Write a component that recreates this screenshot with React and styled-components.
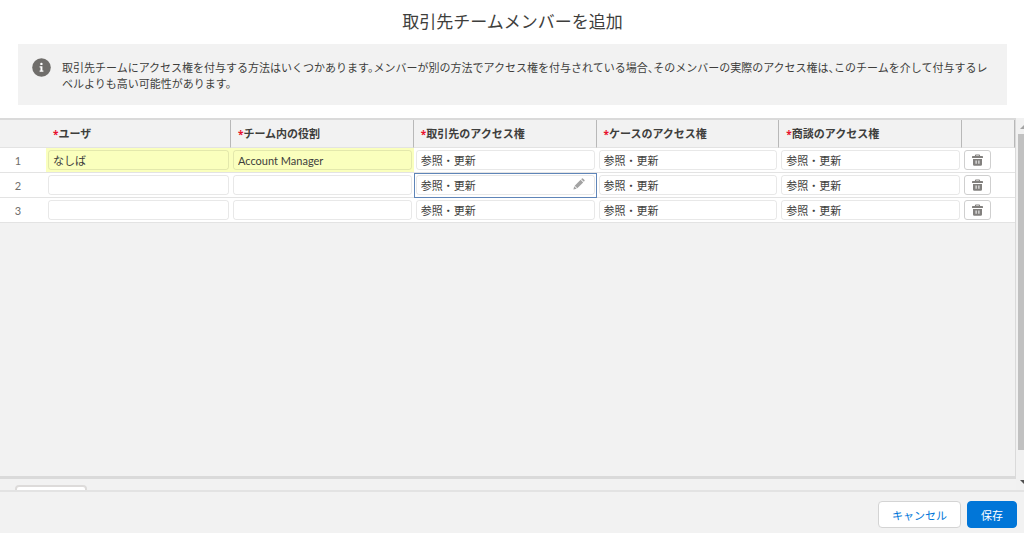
import React from 'react';
import styled, { createGlobalStyle } from 'styled-components';

const COLORS = {
	text: '#3e3e3c',
	muted: '#706e6b',
	icon: '#82807e',
	grey: '#f2f2f2',
	line: '#dadada',
	headLine: '#b8b8b8',
	rowLine: '#e3e3e3',
	edited: '#faffbd',
	active: '#5f85b8',
	blue: '#0176d8',
	red: '#e8112d'
};

const columns = [
	{ key: 'user', label: 'ユーザ', width: '185px' },
	{ key: 'role', label: 'チーム内の役割' },
	{ key: 'account', label: '取引先のアクセス権' },
	{ key: 'cases', label: 'ケースのアクセス権' },
	{ key: 'deal', label: '商談のアクセス権' }
];

const access = {
	account: '参照・更新',
	cases: '参照・更新',
	deal: '参照・更新'
};

const members = [
	{
		id: 1,
		user: 'なしば',
		role: 'Account Manager',
		...access,
		edited: ['user', 'role']
	},
	{ id: 2, user: '', role: '', ...access, edited: [], active: 'account' },
	{ id: 3, user: '', role: '', ...access, edited: [] }
];

function InfoIcon() {
	return (
		<svg width="19" height="19" viewBox="0 0 19 19" aria-hidden="true">
			<circle cx="9.5" cy="9.5" r="9.3" fill={COLORS.muted} />
			<circle cx="9.4" cy="5.9" r="1.2" fill="#fff" />
			<path d="M7.6 8.2h2.8v4.2h1v1.3H7.6v-1.3h.9V9.5h-.9z" fill="#fff" />
		</svg>
	);
}

function TrashIcon() {
	return (
		<svg width="11" height="12" viewBox="0 0 11 12" aria-hidden="true">
			<path
				d="M3.5 2.5V1.5q0-.5.5-.5h3q.5 0 .5.5v1"
				fill="none"
				stroke={COLORS.icon}
				strokeWidth="1.2"
			/>
			<rect x="0" y="2" width="11" height="2" rx=".6" fill={COLORS.icon} />
			<path
				fillRule="evenodd"
				fill={COLORS.icon}
				d="M1 5h9v5.500q0 1.300-1.300 1.300H2.300Q1 11.800 1 10.500zM3.600 6.500v3.300h1V6.500zM6.400 6.500v3.300h1V6.500z"
			/>
		</svg>
	);
}

function PencilIcon() {
	return (
		<svg width="12" height="12" viewBox="0 0 12 12" aria-hidden="true">
			<path
				fill="#a3a3a3"
				d="M.4 11.6 1.2 8.3 3.7 10.8zM1.7 7.7 7.6 1.8 10.2 4.4 4.3 10.3zM8.2 1.2 8.9.5q.5-.4 1 0L11.5 2.1q.4.5 0 1L10.8 3.8z"
			/>
		</svg>
	);
}

function Cell({ member, column }) {
	const isActive = member.active === column.key;
	return (
		<Td $edited={member.edited.includes(column.key)} $active={isActive}>
			<CellInput
				type="text"
				aria-label={`${column.label} ${member.id}`}
				defaultValue={member[column.key]}
			/>
			{isActive && (
				<EditButton type="button" aria-label="編集">
					<PencilIcon />
				</EditButton>
			)}
		</Td>
	);
}

function App() {
	return (
		<Page>
			<GlobalStyle />
			<Header>
				<Title>取引先チームメンバーを追加</Title>
				<Notice>
					<InfoIcon />
					<NoticeText>
						取引先チームにアクセス権を付与する方法はいくつかあります。メンバーが別の方法でアクセス権を付与されている場合、そのメンバーの実際のアクセス権は、このチームを介して付与するレベルよりも高い可能性があります。
					</NoticeText>
				</Notice>
			</Header>
			<Body>
				<Content>
					<Grid>
						<Table>
							<thead>
								<tr>
									<Th $width="46px" $plain />
									{columns.map((column) => (
										<Th key={column.key} scope="col" $width={column.width}>
											<Required>*</Required>
											{column.label}
										</Th>
									))}
									<Th $width="53px" />
								</tr>
							</thead>
							<tbody>
								{members.map((member) => (
									<tr key={member.id}>
										<RowNumber scope="row">{member.id}</RowNumber>
										{columns.map((column) => (
											<Cell key={column.key} member={member} column={column} />
										))}
										<Td>
											<DeleteButton type="button" aria-label={`削除 ${member.id}`}>
												<TrashIcon />
											</DeleteButton>
										</Td>
									</tr>
								))}
							</tbody>
						</Table>
					</Grid>
					<AddRow>
						<AddButton type="button" aria-label="行を追加" />
					</AddRow>
				</Content>
				<ScrollBar aria-hidden="true">
					<ScrollArrow>
						<svg width="10" height="5" viewBox="0 0 10 5">
							<path d="M0 5 5 0l5 5z" fill="#a3a3a3" />
						</svg>
					</ScrollArrow>
					<ScrollTrack>
						<ScrollThumb />
					</ScrollTrack>
					<ScrollArrow>
						<svg width="10" height="5" viewBox="0 0 10 5">
							<path d="M0 0h10L5 5z" fill="#505050" />
						</svg>
					</ScrollArrow>
				</ScrollBar>
			</Body>
			<Footer>
				<Button type="button">キャンセル</Button>
				<Button type="button" $primary>
					保存
				</Button>
			</Footer>
		</Page>
	);
}

export default App;

const GlobalStyle = createGlobalStyle`
	* {
		box-sizing: border-box;
	}
	body {
		margin: 0;
		background-color: #fff;
	}
	body, button, input {
		font-family: Lato, 'Noto Sans CJK JP', sans-serif;
		font-size: 11px;
		color: ${COLORS.text};
	}
`;

const Page = styled.div`
	min-height: 100vh;
	display: flex;
	flex-direction: column;
`;

const Header = styled.header`
	padding: 10px 17px 13px 18px;
`;

const Title = styled.h1`
	margin: 0 0 10px;
	font-size: 17px;
	line-height: 24px;
	font-weight: 400;
	text-align: center;
`;

const Notice = styled.div`
	display: flex;
	gap: 11px;
	padding: 14px 14px 13px;
	background-color: ${COLORS.grey};

	svg {
		flex: none;
	}
`;

const NoticeText = styled.p`
	margin: 2px 0 0;
	line-height: 16px;
	font-feature-settings: 'halt';
`;

const Body = styled.main`
	flex: 1;
	display: flex;
	background-color: ${COLORS.grey};
`;

const Content = styled.div`
	flex: 1;
	min-width: 0;
	display: flex;
	flex-direction: column;
`;

const Grid = styled.div`
	flex: 1;
	border: solid ${COLORS.line};
	border-width: 2px 1px 3px 0;
`;

const Table = styled.table`
	width: 100%;
	table-layout: fixed;
	border-collapse: separate;
	border-spacing: 0;
`;

const Th = styled.th`
	width: ${(props) => props.$width || 'auto'};
	height: 28px;
	padding: 0 7px;
	line-height: 16px;
	text-align: left;
	white-space: nowrap;
	border-bottom: 1px solid ${COLORS.rowLine};
	border-right: ${(props) =>
		props.$plain ? 'none' : `1px solid ${COLORS.headLine}`};
`;

const Required = styled.span`
	font-family: 'Open Sans', sans-serif;
	font-size: 10px;
	color: ${COLORS.red};
`;

const RowNumber = styled.th`
	padding: 0 10px 0 0;
	font-weight: 400;
	text-align: center;
	color: ${COLORS.muted};
	background-color: #fff;
	border-bottom: 1px solid ${COLORS.rowLine};
`;

const Td = styled.td`
	position: relative;
	height: 25px;
	padding: 2px;
	background-color: ${(props) => (props.$edited ? COLORS.edited : '#fff')};
	border-bottom: 1px solid ${COLORS.rowLine};
	outline: ${(props) => (props.$active ? `1px solid ${COLORS.active}` : 'none')};
	outline-offset: -1px;
	z-index: ${(props) => (props.$active ? 1 : 'auto')};
`;

const CellInput = styled.input`
	display: block;
	width: 100%;
	height: 20px;
	padding: 0 4px;
	background-color: transparent;
	border: 1px solid rgba(0, 0, 0, 0.09);
	border-radius: 3px;
	outline: none;
`;

const EditButton = styled.button`
	position: absolute;
	top: 5px;
	right: 12px;
	display: flex;
	padding: 0;
	background: none;
	border: none;
`;

const DeleteButton = styled.button`
	display: flex;
	align-items: center;
	justify-content: center;
	width: 27px;
	height: 20px;
	padding: 0;
	background-color: #fff;
	border: 1px solid #cfcfcf;
	border-radius: 3px;
`;

const AddRow = styled.div`
	height: 11px;
	padding: 6px 15px 0;
	overflow: hidden;
`;

const AddButton = styled.button`
	display: block;
	width: 72px;
	height: 26px;
	background-color: #fff;
	border: 2px solid #dddbda;
	border-radius: 4px;
`;

const ScrollBar = styled.div`
	width: 8px;
	display: flex;
	flex-direction: column;
	overflow: hidden;
	background-color: #f1f1f1;
`;

const ScrollArrow = styled.div`
	height: 16px;
	padding: 6px 0 0 4px;

	svg {
		display: block;
	}
`;

const ScrollTrack = styled.div`
	flex: 1;
	padding: 0 0 0 2px;
`;

const ScrollThumb = styled.div`
	height: 93%;
	min-height: 20px;
	background-color: #c1c1c1;
`;

const Footer = styled.footer`
	display: flex;
	justify-content: flex-end;
	gap: 6px;
	padding: 9px 7px 5px;
	background-color: ${COLORS.grey};
	border-top: 2px solid ${COLORS.rowLine};
`;

const Button = styled.button`
	height: 27px;
	padding: 0 13px;
	color: ${(props) => (props.$primary ? '#fff' : COLORS.blue)};
	background-color: ${(props) => (props.$primary ? COLORS.blue : '#fff')};
	border: 1px solid ${(props) => (props.$primary ? COLORS.blue : '#d4d4d4')};
	border-radius: 4px;
`;
